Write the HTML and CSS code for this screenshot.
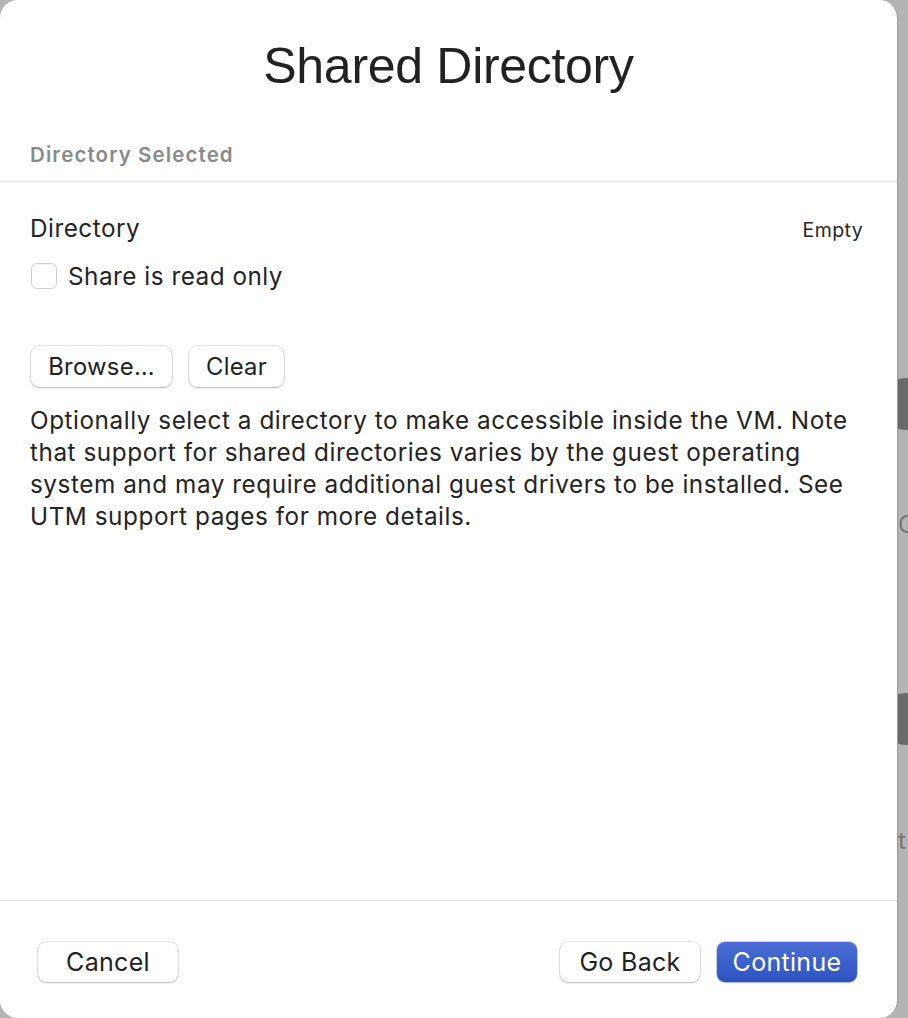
FILE: index.html
```html
<!DOCTYPE html>
<html lang="en">
<head>
<meta charset="utf-8">
<title>Shared Directory</title>
<link rel="stylesheet" href="styles.css">
</head>
<body>
<div class="backdrop">
  <span class="bg-knob bg-knob-1"></span>
  <span class="bg-glyph bg-glyph-g">G</span>
  <span class="bg-knob bg-knob-2"></span>
  <span class="bg-glyph bg-glyph-t">t</span>
</div>
<div class="sheet">
  <header class="sheet-header">
    <h1 class="title">Shared Directory</h1>
  </header>
  <div class="section-label">Directory Selected</div>
  <main class="content">
    <div class="row">
      <span class="label">Directory</span>
      <span class="value">Empty</span>
    </div>
    <label class="check-row">
      <span class="checkbox"></span>
      <span class="label">Share is read only</span>
    </label>
    <div class="button-row">
      <button class="btn btn-browse">Browse…</button>
      <button class="btn btn-clear">Clear</button>
    </div>
    <p class="description">Optionally select a directory to make accessible inside the VM. Note that support for shared directories varies by the guest operating system and may require additional guest drivers to be installed. See UTM support pages for more details.</p>
  </main>
  <footer class="footer">
    <button class="btn btn-footer">Cancel</button>
    <div class="footer-right">
      <button class="btn btn-footer">Go Back</button>
      <button class="btn btn-footer btn-primary">Continue</button>
    </div>
  </footer>
</div>
</body>
</html>
```
FILE: styles.css
```css
* { box-sizing: border-box; }
html, body {
  margin: 0;
  padding: 0;
  width: 908px;
  height: 1018px;
  overflow: hidden;
}
body {
  background: #b4b4b4;
  font-family: Inter, "Noto Sans", "Liberation Sans", sans-serif;
  color: #242424;
  position: relative;
}
.backdrop {
  position: absolute;
  inset: 0;
}
.bg-knob {
  position: absolute;
  left: 880px;
  width: 52px;
  height: 52px;
  border-radius: 50%;
  background: #6a6a6a;
}
.bg-knob-1 { top: 378px; }
.bg-knob-2 { top: 693px; }
.bg-glyph {
  position: absolute;
  left: 898px;
  font-size: 24px;
  color: #767676;
}
.bg-glyph-g { top: 510px; }
.bg-glyph-t { top: 826px; }

.sheet {
  position: relative;
  width: 898px;
  height: 1018px;
  background: #ffffff;
  border-radius: 18px;
  border-right: 1px solid #9a9a9a;
  display: flex;
  flex-direction: column;
}
.sheet-header {
  height: 129px;
  display: flex;
  justify-content: center;
  padding-top: 36px;
}
.title {
  margin: 0;
  font-family: "Liberation Sans", Arial, sans-serif;
  font-weight: 400;
  font-size: 50px;
  line-height: 60px;
  color: #222222;
  letter-spacing: -0.3px;
}
.section-label {
  padding: 0 30px;
  height: 53px;
  line-height: 52px;
  font-size: 20.5px;
  font-weight: 600;
  letter-spacing: 1.1px;
  color: #8a8a8a;
  border-bottom: 1px solid #dedede;
}
.content {
  flex: 1;
  padding: 30px 36px 0 30px;
  display: flex;
  flex-direction: column;
}
.row {
  display: flex;
  justify-content: space-between;
  align-items: baseline;
  height: 32px;
  margin-right: -2px;
}
.label {
  font-size: 24.3px;
  letter-spacing: 0.5px;
  line-height: 32px;
}
.value {
  font-size: 19.5px;
  letter-spacing: 0.4px;
  color: #262626;
}
.check-row {
  display: flex;
  align-items: center;
  gap: 11px;
  margin-top: 16px;
  height: 32px;
}
.checkbox {
  width: 26px;
  height: 26px;
  margin-left: 1px;
  border: 1px solid #cfcfcf;
  border-radius: 6px;
  background: #ffffff;
  box-shadow: inset 0 1px 1px rgba(0,0,0,0.04);
}
.button-row {
  display: flex;
  gap: 17px;
  margin-top: 54px;
  padding-left: 1px;
}
.btn {
  font-family: inherit;
  font-size: 23.8px;
  letter-spacing: 0.3px;
  color: #222222;
  background: #ffffff;
  border: none;
  border-radius: 8px;
  height: 41px;
  padding: 0 10px;
  box-shadow: 0 0 0 0.5px rgba(0,0,0,0.18), 0 1px 2px rgba(0,0,0,0.22);
  cursor: default;
}
.btn-browse { width: 141px; }
.btn-clear { width: 95px; }
.description {
  margin: 17px 0 0;
  font-size: 24.3px;
  letter-spacing: 0.55px;
  line-height: 32px;
  color: #242424;
}
.footer {
  height: 118px;
  border-top: 1px solid #dedede;
  display: flex;
  justify-content: space-between;
  align-items: center;
  padding: 4px 40px 0 38px;
}
.footer-right {
  display: flex;
  gap: 17px;
}
.btn-footer {
  width: 140px;
  height: 40px;
  font-size: 25px;
}
.btn-primary {
  color: #ffffff;
  background: linear-gradient(#4b6fd6, #2e52c2);
  box-shadow: 0 0 0 0.5px rgba(30,60,160,0.4), 0 1px 2px rgba(0,0,0,0.2);
}
```
